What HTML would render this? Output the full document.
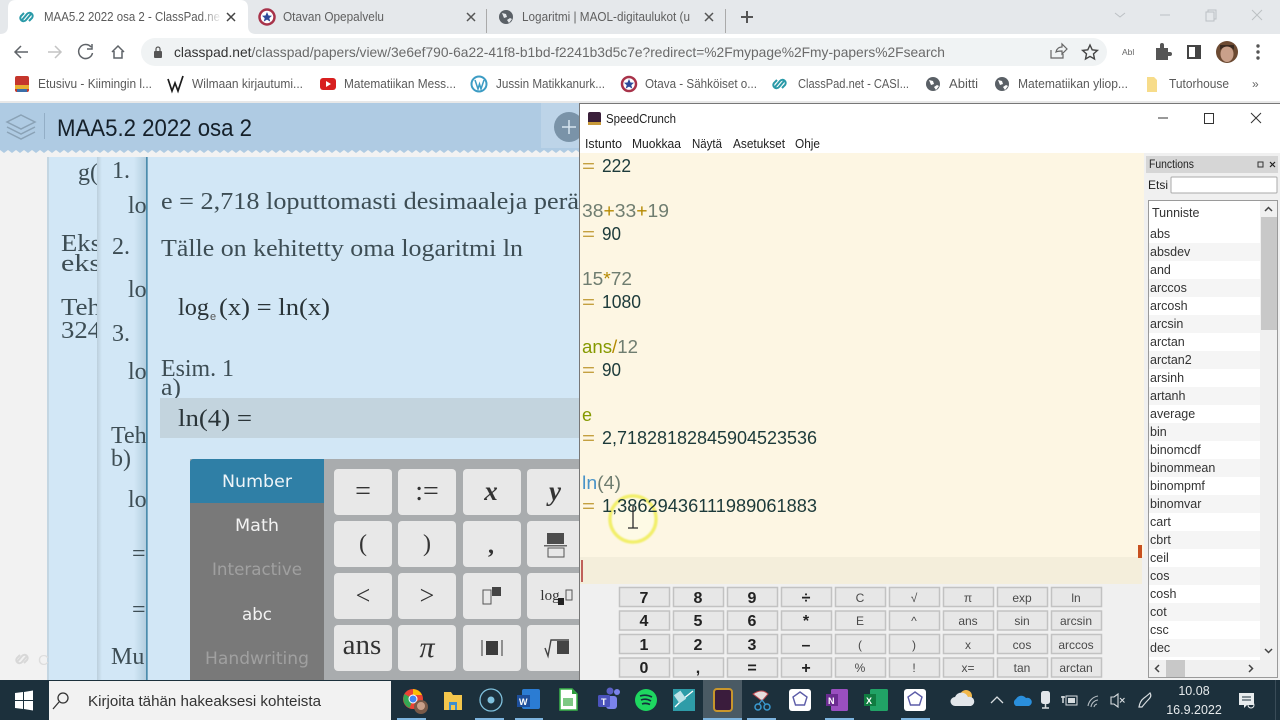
<!DOCTYPE html>
<html><head><meta charset="utf-8"><title>MAA5.2 2022 osa 2</title>
<style>
html,body{margin:0;padding:0;background:#fff;width:1280px;height:720px;overflow:hidden}
svg{display:block}
text{font-family:"Liberation Sans",sans-serif;white-space:pre}
.s text{font-family:"Liberation Serif",serif;fill:#3d4d54}
.d text{font-size:18px}
.f text{font-size:12.5px;fill:#333}
.b{font-size:13px;fill:#5a5a5a}
.k rect{fill:#e7e7e7;stroke:#c2c2c2;stroke-width:1.5}
.kb text{font-weight:bold;font-size:16px;fill:#222;text-anchor:middle}
.kl text{font-size:12px;fill:#4a4a4a;text-anchor:middle}
.c rect{fill:#e8e8e8}
.t text{font-family:"DejaVu Sans",sans-serif;font-size:16.5px}
.m text{font-family:"Liberation Serif",serif;fill:#333;text-anchor:middle}
</style></head><body>
<svg width="1280" height="720" viewBox="0 0 1280 720" xmlns="http://www.w3.org/2000/svg">
<defs>
<linearGradient id="sh" x1="0" x2="1" y1="0" y2="0"><stop offset="0" stop-color="#bccfdc"/><stop offset="1" stop-color="#d2e7f6"/></linearGradient>
<linearGradient id="sr" x1="0" x2="1" y1="0" y2="0"><stop offset="0" stop-color="#d2e7f6"/><stop offset="1" stop-color="#b3cedf"/></linearGradient>
<linearGradient id="fd" x1="0" x2="1" y1="0" y2="0"><stop offset="0" stop-color="#fff" stop-opacity="0"/><stop offset="1" stop-color="#fff"/></linearGradient>
<pattern id="sc" x="0" y="148" width="8" height="5" patternUnits="userSpaceOnUse"><path d="M0 0h8v2l-4 3-4-3z" fill="#afcbe3"/></pattern>
<filter id="bl"><feGaussianBlur stdDeviation=".7"/></filter>
</defs>

<!-- tab strip -->
<rect width="1280" height="34" fill="#e5e8eb"/>
<path d="M0 34Q8 34 8 26V8Q8 0 16 0H240Q248 0 248 8V26Q248 34 256 34Z" fill="#fff"/>
<g fill="none" stroke="#2a9aa8" stroke-width="2"><path d="M22 20l5-6a3 3 0 0 1 5 4l-3 3"/><path d="M31 14l-5 6a3 3 0 0 1-5-4l3-3"/></g>
<text x="44" y="21" font-size="13" fill="#5a5a5a" textLength="176" lengthAdjust="spacingAndGlyphs">MAA5.2 2022 osa 2 - ClassPad.ne</text>
<rect x="200" y="8" width="22" height="20" fill="url(#fd)"/>
<path d="M227 13l8 8M235 13l-8 8" stroke="#444" stroke-width="1.500"/>
<circle cx="267" cy="17" r="7.500" fill="#fff" stroke="#a8334a" stroke-width="2.500"/><path d="M267 12l1.500 3.500 3.500.3-2.700 2.300 1 3.500-3.300-2-3.300 2 1-3.500-2.700-2.300 3.500-.3z" fill="#2e4a9a"/>
<text x="283" y="21" font-size="13" fill="#5f5f5f" textLength="101" lengthAdjust="spacingAndGlyphs">Otavan Opepalvelu</text>
<path d="M467 13l8 8M475 13l-8 8" stroke="#555" stroke-width="1.500"/>
<rect x="486" y="9" width="1" height="24" fill="#aaa"/>
<circle cx="506" cy="17" r="7" fill="#5a6066"/><path d="M502 13l4 1 1 3-3 1zM507 20l3-2 2 1-3 4z" fill="#e5e8eb"/>
<text x="522" y="21" font-size="13" fill="#5f5f5f" textLength="168" lengthAdjust="spacingAndGlyphs">Logaritmi | MAOL-digitaulukot (u</text>
<path d="M705 13l8 8M713 13l-8 8" stroke="#555" stroke-width="1.500"/>
<rect x="725" y="9" width="1" height="24" fill="#aaa"/>
<path d="M741 17h12M747 11v12" stroke="#555" stroke-width="2"/>
<path d="M1115 13l5 4 5-4" fill="none" stroke="#bcc0c4" stroke-width="1"/>
<path d="M1160 15h10" stroke="#bcc0c4" stroke-width="1"/>
<path d="M1206 12h8v9h-8zM1208 12v-2h8v9h-2" fill="none" stroke="#bcc0c4" stroke-width="1"/>
<path d="M1252 10l10 10M1262 10l-10 10" stroke="#bcc0c4" stroke-width="1"/>

<!-- toolbar -->
<rect y="34" width="1280" height="34" fill="#fff"/>
<path d="M28 52H16M21 46l-6 6 6 6" fill="none" stroke="#5f6368" stroke-width="1.500"/>
<path d="M48 52H60M55 46l6 6-6 6" fill="none" stroke="#c4c4c4" stroke-width="1.500"/>
<path d="M91 47a7 7 0 1 0 1.500 6M92 44v5h-5" fill="none" stroke="#5f6368" stroke-width="1.500"/>
<path d="M112 52l6-6 6 6M114 51v7h8v-7" fill="none" stroke="#5f6368" stroke-width="1.500"/>
<rect x="141" y="38" width="966" height="28" rx="14" fill="#f0f3f4"/>
<rect x="154" y="51" width="8" height="7" rx="1" fill="#555"/><path d="M156 51v-2a2 2 0 0 1 4 0v2" fill="none" stroke="#555" stroke-width="1.200"/>
<text x="174" y="57" font-size="14" fill="#6a6a6a" textLength="771" lengthAdjust="spacingAndGlyphs"><tspan fill="#333">classpad.net</tspan>/classpad/papers/view/3e6ef790-6a22-41f8-b1bd-f2241b3d5c7e?redirect=%2Fmypage%2Fmy-papers%2Fsearch</text>
<path d="M1051 50v8h12v-4M1056 52q1-5 6-5v-3l5 5-5 5v-3q-4 0-6 1z" fill="none" stroke="#666" stroke-width="1.200"/>
<path d="M1090 45l2.200 4.800 5.200.6-3.900 3.500 1 5.100-4.500-2.600-4.500 2.600 1-5.100-3.900-3.500 5.200-.6z" fill="none" stroke="#444" stroke-width="1.400"/>
<text x="1122" y="55" font-size="8.500" fill="#666">Abl</text>
<path d="M1156 48h4v-3a2 2 0 0 1 4 0v3h4v4h2a2 2 0 0 1 0 4h-2v4h-12z" fill="#555"/>
<rect x="1188" y="46" width="12" height="12" fill="none" stroke="#444" stroke-width="2"/><rect x="1195" y="46" width="5" height="12" fill="#444"/>
<circle cx="1227" cy="52" r="11" fill="#6c4a32"/><ellipse cx="1227" cy="54" rx="6.500" ry="8" fill="#c9a08a"/><path d="M1220 50q7-7 14 0v-5h-14z" fill="#3a2a20"/>
<g fill="#555"><circle cx="1258" cy="46" r="1.700"/><circle cx="1258" cy="52" r="1.700"/><circle cx="1258" cy="58" r="1.700"/></g>

<!-- bookmarks -->
<rect y="68" width="1280" height="34" fill="#fff"/>
<rect x="15" y="76" width="14" height="16" rx="2" fill="#c5362c"/><rect x="15" y="85" width="14" height="4" fill="#e8b030"/><rect x="17" y="89" width="10" height="3" fill="#3a6ea8"/>
<text class="b" x="38" y="88" textLength="114" lengthAdjust="spacingAndGlyphs">Etusivu - Kiimingin l...</text>
<path d="M168 79l4 12 3-8 3 8 5-15" fill="none" stroke="#1c1c1c" stroke-width="1.700"/>
<text class="b" x="192" y="88" textLength="111" lengthAdjust="spacingAndGlyphs">Wilmaan kirjautumi...</text>
<rect x="320" y="78" width="16" height="12" rx="3" fill="#d81f1f"/><path d="M326 81l5 3-5 3z" fill="#fff"/>
<text class="b" x="344" y="88" textLength="112" lengthAdjust="spacingAndGlyphs">Matematiikan Mess...</text>
<circle cx="479" cy="84" r="7.500" fill="#fff" stroke="#3d9cc4" stroke-width="2"/><path d="M475 80l3 9 1.500-5 1.500 5 3-9" fill="none" stroke="#3d9cc4" stroke-width="1.500"/>
<text class="b" x="496" y="88" textLength="109" lengthAdjust="spacingAndGlyphs">Jussin Matikkanurk...</text>
<circle cx="629" cy="84" r="7" fill="#fff" stroke="#a8334a" stroke-width="2.500"/><path d="M629 79l1.500 3.500 3.500.3-2.700 2.300 1 3.500-3.300-2-3.300 2 1-3.500-2.700-2.300 3.500-.3z" fill="#2e4a9a"/>
<text class="b" x="645" y="88" textLength="112" lengthAdjust="spacingAndGlyphs">Otava - Sähköiset o...</text>
<g fill="none" stroke="#2a9aa8" stroke-width="2"><path d="M775 87l5-6a3 3 0 0 1 5 4l-3 3"/><path d="M784 81l-5 6a3 3 0 0 1-5-4l3-3"/></g>
<text class="b" x="798" y="88" textLength="111" lengthAdjust="spacingAndGlyphs">ClassPad.net - CASI...</text>
<circle cx="933" cy="84" r="7" fill="#5a6066"/><path d="M929 80l4 1 1 3-3 1zM934 87l3-2 2 1-3 4z" fill="#fff"/>
<text class="b" x="949" y="88" textLength="29" lengthAdjust="spacingAndGlyphs">Abitti</text>
<circle cx="1002" cy="84" r="7" fill="#5a6066"/><path d="M998 80l4 1 1 3-3 1zM1003 87l3-2 2 1-3 4z" fill="#fff"/>
<text class="b" x="1018" y="88" textLength="110" lengthAdjust="spacingAndGlyphs">Matematiikan yliop...</text>
<path d="M1147 77h7l3 3v12h-10z" fill="#f7dc8a"/>
<text class="b" x="1169" y="88" textLength="60" lengthAdjust="spacingAndGlyphs">Tutorhouse</text>
<text x="1252" y="88" font-size="12" fill="#666">»</text>
<rect y="101" width="1280" height="2" fill="#e8e8e8"/>

<!-- page background -->
<rect y="103" width="580" height="577" fill="#f2f2f2"/>
<rect y="103" width="580" height="45" fill="#afcbe3"/>
<rect x="541" y="103" width="39" height="45" fill="#bdd4e8"/>
<rect y="148" width="580" height="5" fill="url(#sc)"/>
<path d="M21 115l14 7-14 7-14-7z" fill="none" stroke="#8aa2b6" stroke-width="1.500"/>
<path d="M7 127l14 7 14-7M7 132l14 7 14-7" fill="none" stroke="#8aa2b6" stroke-width="1.500"/>
<rect x="44" y="113" width="1" height="26" fill="#93aec6"/>
<text x="57" y="136" font-size="24" fill="#15202a" textLength="195" lengthAdjust="spacingAndGlyphs">MAA5.2 2022 osa 2</text>
<circle cx="569" cy="127" r="15" fill="#7a93a8"/><path d="M562 127h14M569 120v14" stroke="#d8e6f0" stroke-width="1.500"/>

<!-- paper strips -->
<g class="s" font-size="24">
<rect x="47" y="157" width="60" height="523" fill="#d2e7f6"/>
<rect x="47" y="157" width="2" height="523" fill="#c4d6e2"/>
<text x="78" y="180">g(</text>
<text x="61" y="251" textLength="40" lengthAdjust="spacingAndGlyphs">Eks</text>
<text x="61" y="271" textLength="40" lengthAdjust="spacingAndGlyphs">eks</text>
<text x="61" y="315" textLength="40" lengthAdjust="spacingAndGlyphs">Teh</text>
<text x="61" y="338" textLength="40" lengthAdjust="spacingAndGlyphs">324</text>
<rect x="97" y="157" width="52" height="523" fill="#d2e7f6"/>
<rect x="97" y="157" width="5" height="523" fill="url(#sh)"/>
<rect x="134" y="157" width="12" height="523" fill="url(#sr)"/>
<text x="112" y="178">1.</text>
<text x="128" y="213">lo</text>
<text x="112" y="254">2.</text>
<text x="128" y="297">lo</text>
<text x="112" y="341">3.</text>
<text x="128" y="379">lo</text>
<text x="111" y="443">Teh</text>
<text x="111" y="466">b)</text>
<text x="128" y="507">lo</text>
<text x="132" y="561">=</text>
<text x="132" y="617">=</text>
<text x="111" y="664">Mu</text>
<rect x="146" y="157" width="434" height="523" fill="#d2e7f6"/>
<rect x="146" y="157" width="1.700" height="523" fill="#4c8cad"/>
<text x="161" y="209" textLength="418" lengthAdjust="spacingAndGlyphs">e = 2,718 loputtomasti desimaaleja perä</text>
<text x="161" y="256" textLength="362" lengthAdjust="spacingAndGlyphs">Tälle on kehitetty oma logaritmi ln</text>
<text x="178" y="315" textLength="31" lengthAdjust="spacingAndGlyphs" style="fill:#2a3438">log</text>
<text x="210" y="320" font-size="11" style="font-family:'Liberation Sans',sans-serif;fill:#555">e</text>
<text x="219" y="315" textLength="111" lengthAdjust="spacingAndGlyphs" style="fill:#2a3438">(x) = ln(x)</text>
<text x="161" y="376" textLength="73" lengthAdjust="spacingAndGlyphs">Esim. 1</text>
<text x="161" y="395" textLength="20" lengthAdjust="spacingAndGlyphs">a)</text>
<rect x="160" y="398" width="420" height="40" fill="#c3d4de"/>
<text x="178" y="426" textLength="74" lengthAdjust="spacingAndGlyphs" style="fill:#2a3438">ln(4) =</text>
</g>
<g fill="none" stroke="#d8d8d8" stroke-width="2"><path d="M17 662l5-6a3 3 0 0 1 5 4l-3 3"/><path d="M27 656l-5 6a3 3 0 0 1-5-4l3-3"/></g>
<text x="38" y="665" font-size="15" fill="#ddd">C</text>

<!-- on-screen CAS keyboard -->
<rect x="190" y="459" width="390" height="221" fill="#a9acae"/>
<path d="M190 680V463q0-4 4-4h130v221z" fill="#797979"/>
<path d="M190 503V463q0-4 4-4h130v44z" fill="#2f7fa6"/>
<g class="t">
<text x="222" y="487" fill="#eef4f8" textLength="70" lengthAdjust="spacingAndGlyphs">Number</text>
<text x="235" y="531" fill="#f2f2f2" textLength="44" lengthAdjust="spacingAndGlyphs">Math</text>
<text x="212" y="575" fill="#a0a0a0" textLength="90" lengthAdjust="spacingAndGlyphs">Interactive</text>
<text x="242" y="620" fill="#f2f2f2" textLength="30" lengthAdjust="spacingAndGlyphs">abc</text>
<text x="205" y="664" fill="#a0a0a0" textLength="104" lengthAdjust="spacingAndGlyphs">Handwriting</text>
</g>
<g class="c">
<rect x="334" y="469" width="58" height="46" rx="4"/><rect x="398" y="469" width="58" height="46" rx="4"/><rect x="463" y="469" width="58" height="46" rx="4"/><rect x="527" y="469" width="58" height="46" rx="4"/>
<rect x="334" y="521" width="58" height="46" rx="4"/><rect x="398" y="521" width="58" height="46" rx="4"/><rect x="463" y="521" width="58" height="46" rx="4"/><rect x="527" y="521" width="58" height="46" rx="4"/>
<rect x="334" y="573" width="58" height="46" rx="4"/><rect x="398" y="573" width="58" height="46" rx="4"/><rect x="463" y="573" width="58" height="46" rx="4"/><rect x="527" y="573" width="58" height="46" rx="4"/>
<rect x="334" y="625" width="58" height="46" rx="4"/><rect x="398" y="625" width="58" height="46" rx="4"/><rect x="463" y="625" width="58" height="46" rx="4"/><rect x="527" y="625" width="58" height="46" rx="4"/>
</g>
<g class="m">
<text x="363" y="500" font-size="28">=</text>
<text x="427" y="500" font-size="28">:=</text>
<text x="491" y="500" font-size="27" font-weight="bold" font-style="italic">x</text>
<text x="555" y="500" font-size="27" font-weight="bold" font-style="italic">y</text>
<text x="363" y="551" font-size="24">(</text>
<text x="427" y="551" font-size="24">)</text>
<text x="491" y="553" font-size="24" font-weight="bold">,</text>
<text x="363" y="604" font-size="26">&lt;</text>
<text x="427" y="604" font-size="26">&gt;</text>
<text x="362" y="654" font-size="29">ans</text>
<text x="427" y="657" font-size="30" font-style="italic">π</text>
<text x="550" y="600" font-size="15">log</text>
</g>
<rect x="547" y="533" width="17" height="11" fill="#4d4d4d"/><rect x="544" y="545" width="23" height="1.500" fill="#666"/><rect x="548" y="548" width="16" height="9" fill="none" stroke="#555"/>
<rect x="483" y="590" width="8" height="14" fill="none" stroke="#555"/><rect x="492" y="587" width="9" height="9" fill="#444"/>
<rect x="558" y="598" width="6" height="7" fill="#222"/><rect x="566" y="590" width="6" height="10" fill="none" stroke="#555"/>
<rect x="486" y="641" width="12" height="14" fill="#3c3c3c"/><path d="M482 640v16M502 640v16" stroke="#555" stroke-width="1.200"/>
<rect x="557" y="641" width="12" height="13" fill="#444"/><path d="M545 648l3 8 3-16h18" fill="none" stroke="#444" stroke-width="1.400"/>

<!-- SpeedCrunch window -->
<rect x="579" y="103" width="701" height="577" fill="#f0f0f0"/>
<rect x="579.500" y="103.500" width="701" height="577" fill="none" stroke="#777"/>
<rect x="580" y="104" width="700" height="49" fill="#fff"/>
<rect x="588" y="112" width="13" height="13" rx="2" fill="#3a1f3a"/><rect x="588" y="122" width="13" height="3" fill="#c89a3a"/>
<text x="606" y="123" font-size="13" fill="#222" textLength="70" lengthAdjust="spacingAndGlyphs">SpeedCrunch</text>
<path d="M1158 118h10" stroke="#333"/>
<rect x="1204.500" y="113.500" width="9" height="10" fill="none" stroke="#333"/>
<path d="M1251 113l10 10M1261 113l-10 10" stroke="#333"/>
<g font-size="12.500" fill="#222">
<text x="585" y="148" textLength="37" lengthAdjust="spacingAndGlyphs">Istunto</text>
<text x="632" y="148" textLength="49" lengthAdjust="spacingAndGlyphs">Muokkaa</text>
<text x="692" y="148" textLength="30" lengthAdjust="spacingAndGlyphs">Näytä</text>
<text x="733" y="148" textLength="52" lengthAdjust="spacingAndGlyphs">Asetukset</text>
<text x="795" y="148" textLength="25" lengthAdjust="spacingAndGlyphs">Ohje</text>
</g>
<rect x="580" y="153" width="564" height="404" fill="#fdf6e3"/>
<rect x="580" y="557" width="562" height="27" fill="#f4eedb"/>
<rect x="581" y="560" width="2" height="22" fill="#c0605a"/>
<rect x="1138" y="545" width="4" height="13" fill="#c8501e"/>

<circle cx="633" cy="519" r="23" fill="#fffde8" fill-opacity=".5" stroke="#f2ef6a" stroke-width="3.500" filter="url(#bl)"/>
<g class="d">
<text x="582" y="172" fill="#c4a040" textLength="13" lengthAdjust="spacingAndGlyphs">=</text><text x="602" y="172" fill="#1c3a3a" textLength="29" lengthAdjust="spacingAndGlyphs">222</text>
<text x="582" y="217" fill="#6f7d70" textLength="87" lengthAdjust="spacingAndGlyphs">38<tspan fill="#b58900">+</tspan>33<tspan fill="#b58900">+</tspan>19</text>
<text x="582" y="240" fill="#c4a040" textLength="13" lengthAdjust="spacingAndGlyphs">=</text><text x="602" y="240" fill="#1c3a3a" textLength="19" lengthAdjust="spacingAndGlyphs">90</text>
<text x="582" y="285" fill="#6f7d70" textLength="50" lengthAdjust="spacingAndGlyphs">15<tspan fill="#b58900">*</tspan>72</text>
<text x="582" y="308" fill="#c4a040" textLength="13" lengthAdjust="spacingAndGlyphs">=</text><text x="602" y="308" fill="#1c3a3a" textLength="39" lengthAdjust="spacingAndGlyphs">1080</text>
<text x="582" y="353" fill="#6f7d70" textLength="56" lengthAdjust="spacingAndGlyphs"><tspan fill="#859900">ans</tspan><tspan fill="#b58900">/</tspan>12</text>
<text x="582" y="376" fill="#c4a040" textLength="13" lengthAdjust="spacingAndGlyphs">=</text><text x="602" y="376" fill="#1c3a3a" textLength="19" lengthAdjust="spacingAndGlyphs">90</text>
<text x="582" y="421" fill="#859900">e</text>
<text x="582" y="444" fill="#c4a040" textLength="13" lengthAdjust="spacingAndGlyphs">=</text><text x="602" y="444" fill="#1c3a3a" textLength="215" lengthAdjust="spacingAndGlyphs">2,71828182845904523536</text>
<text x="582" y="489" fill="#6f7d70" textLength="39" lengthAdjust="spacingAndGlyphs"><tspan fill="#4a94c8">ln</tspan>(4)</text>
<text x="582" y="512" fill="#c4a040" textLength="13" lengthAdjust="spacingAndGlyphs">=</text><text x="602" y="512" fill="#1c3a3a" textLength="215" lengthAdjust="spacingAndGlyphs">1,38629436111989061883</text>
</g>
<path d="M633 506v22M628 528h10" stroke="#2a2a2a" stroke-width="1.300"/>

<!-- keypad -->
<g class="k">
<rect x="619.500" y="587.500" width="50" height="19"/><rect x="673.500" y="587.500" width="50" height="19"/><rect x="727.500" y="587.500" width="50" height="19"/><rect x="781.500" y="587.500" width="50" height="19"/><rect x="835.500" y="587.500" width="50" height="19"/><rect x="889.500" y="587.500" width="50" height="19"/><rect x="943.500" y="587.500" width="50" height="19"/><rect x="997.500" y="587.500" width="50" height="19"/><rect x="1051.500" y="587.500" width="50" height="19"/>
<rect x="619.500" y="611" width="50" height="19"/><rect x="673.500" y="611" width="50" height="19"/><rect x="727.500" y="611" width="50" height="19"/><rect x="781.500" y="611" width="50" height="19"/><rect x="835.500" y="611" width="50" height="19"/><rect x="889.500" y="611" width="50" height="19"/><rect x="943.500" y="611" width="50" height="19"/><rect x="997.500" y="611" width="50" height="19"/><rect x="1051.500" y="611" width="50" height="19"/>
<rect x="619.500" y="634.500" width="50" height="19"/><rect x="673.500" y="634.500" width="50" height="19"/><rect x="727.500" y="634.500" width="50" height="19"/><rect x="781.500" y="634.500" width="50" height="19"/><rect x="835.500" y="634.500" width="50" height="19"/><rect x="889.500" y="634.500" width="50" height="19"/><rect x="943.500" y="634.500" width="50" height="19"/><rect x="997.500" y="634.500" width="50" height="19"/><rect x="1051.500" y="634.500" width="50" height="19"/>
<rect x="619.500" y="658" width="50" height="19"/><rect x="673.500" y="658" width="50" height="19"/><rect x="727.500" y="658" width="50" height="19"/><rect x="781.500" y="658" width="50" height="19"/><rect x="835.500" y="658" width="50" height="19"/><rect x="889.500" y="658" width="50" height="19"/><rect x="943.500" y="658" width="50" height="19"/><rect x="997.500" y="658" width="50" height="19"/><rect x="1051.500" y="658" width="50" height="19"/>
</g>
<g class="kb">
<text x="644" y="603">7</text><text x="698" y="603">8</text><text x="752" y="603">9</text><text x="806" y="603">÷</text>
<text x="644" y="626">4</text><text x="698" y="626">5</text><text x="752" y="626">6</text><text x="806" y="626">*</text>
<text x="644" y="650">1</text><text x="698" y="650">2</text><text x="752" y="650">3</text><text x="806" y="650">–</text>
<text x="644" y="673">0</text><text x="698" y="673">,</text><text x="752" y="673">=</text><text x="806" y="673">+</text>
</g>
<g class="kl">
<text x="860" y="602">C</text><text x="914" y="602">√</text><text x="968" y="602">π</text><text x="1022" y="602">exp</text><text x="1076" y="602">ln</text>
<text x="860" y="625">E</text><text x="914" y="625">^</text><text x="968" y="625">ans</text><text x="1022" y="625">sin</text><text x="1076" y="625">arcsin</text>
<text x="860" y="649">(</text><text x="914" y="649">)</text><text x="968" y="649">x</text><text x="1022" y="649">cos</text><text x="1076" y="649">arccos</text>
<text x="860" y="672">%</text><text x="914" y="672">!</text><text x="968" y="672">x=</text><text x="1022" y="672">tan</text><text x="1076" y="672">arctan</text>
</g>

<!-- functions panel -->
<rect x="1144" y="153" width="136" height="527" fill="#f0f0f0"/>
<rect x="1146" y="156" width="132" height="17" fill="#d6d6d6"/>
<text x="1149" y="168" font-size="12" fill="#222" textLength="45" lengthAdjust="spacingAndGlyphs">Functions</text>
<rect x="1258" y="162" width="5" height="5" fill="none" stroke="#333"/>
<path d="M1270 162l5 5M1275 162l-5 5" stroke="#222" stroke-width="1.200"/>
<text x="1148" y="189" font-size="12" fill="#222">Etsi</text>
<rect x="1171" y="177" width="106" height="16" rx="1" fill="#fff" stroke="#aaa"/>
<rect x="1148.500" y="200.500" width="129" height="477" fill="#f0f0f0" stroke="#9a9a9a"/>
<rect x="1149" y="201" width="111" height="459" fill="#fff"/>
<text x="1152" y="217" font-size="12.500" fill="#333">Tunniste</text>
<g fill="#f5f5f5">
<rect x="1149" y="243" width="111" height="18"/><rect x="1149" y="279" width="111" height="18"/><rect x="1149" y="315" width="111" height="18"/><rect x="1149" y="351" width="111" height="18"/><rect x="1149" y="387" width="111" height="18"/><rect x="1149" y="423" width="111" height="18"/><rect x="1149" y="459" width="111" height="18"/><rect x="1149" y="495" width="111" height="18"/><rect x="1149" y="531" width="111" height="18"/><rect x="1149" y="567" width="111" height="18"/><rect x="1149" y="603" width="111" height="18"/><rect x="1149" y="639" width="111" height="18"/>
</g>
<g class="f">
<text x="1150" y="238">abs</text><text x="1150" y="256">absdev</text><text x="1150" y="274">and</text><text x="1150" y="292">arccos</text><text x="1150" y="310">arcosh</text><text x="1150" y="328">arcsin</text><text x="1150" y="346">arctan</text><text x="1150" y="364">arctan2</text><text x="1150" y="382">arsinh</text><text x="1150" y="400">artanh</text><text x="1150" y="418">average</text><text x="1150" y="436">bin</text><text x="1150" y="454">binomcdf</text><text x="1150" y="472">binommean</text><text x="1150" y="490">binompmf</text><text x="1150" y="508">binomvar</text><text x="1150" y="526">cart</text><text x="1150" y="544">cbrt</text><text x="1150" y="562">ceil</text><text x="1150" y="580">cos</text><text x="1150" y="598">cosh</text><text x="1150" y="616">cot</text><text x="1150" y="634">csc</text><text x="1150" y="652">dec</text>
</g>
<rect x="1261" y="217" width="16" height="113" fill="#c8c8c8"/>
<path d="M1265 211l3.500-3.500 3.500 3.500M1265 649l3.500 3.500 3.500-3.500" fill="none" stroke="#444" stroke-width="1.500"/>
<rect x="1166" y="660" width="19" height="17" fill="#c8c8c8"/>
<path d="M1159 665l-3.500 3.500 3.500 3.500M1249 665l3.500 3.500-3.500 3.500" fill="none" stroke="#444" stroke-width="1.500"/>

<!-- taskbar -->
<rect y="680" width="1280" height="40" fill="#1c303c"/>
<g fill="#fff"><path d="M15 693l8-1v8h-8zM24 692l9-1.500V700h-9zM15 701h8v8l-8-1zM24 701h9v9.500l-9-1.500z"/></g>
<rect x="49" y="681" width="342" height="39" fill="#f2f2f2"/>
<circle cx="63" cy="698" r="5" fill="none" stroke="#333" stroke-width="1.300"/><path d="M59 702l-6 7" stroke="#333" stroke-width="1.300"/>
<text x="88" y="706" font-size="14.500" fill="#333" textLength="233" lengthAdjust="spacingAndGlyphs">Kirjoita tähän hakeaksesi kohteista</text>

<circle cx="413" cy="699" r="10" fill="#ea4335"/><path d="M413 699l-8.500-5a10 10 0 0 0 5 14z" fill="#34a853"/><path d="M413 689a10 10 0 0 1 9 6h-9z" fill="#fbbc05"/><circle cx="413" cy="699" r="4" fill="#4285f4" stroke="#fff"/>
<circle cx="421" cy="707" r="7" fill="#7a5a48"/><circle cx="421" cy="706" r="4" fill="#c9a08a"/>
<path d="M444 692h7l2 3h9v15h-18z" fill="#f4c64c"/><rect x="449" y="702" width="8" height="8" fill="#3e8ecf"/><rect x="451" y="705" width="4" height="5" fill="#f4c64c"/>
<circle cx="491" cy="700" r="11" fill="none" stroke="#7fc0dc" stroke-width="1.300"/><circle cx="491" cy="700" r="3.500" fill="#7fc0dc"/>
<rect x="522" y="689" width="18" height="20" rx="2" fill="#2b7cd3"/><rect x="517" y="695" width="13" height="12" fill="#1d4f9c"/><text x="519" y="705" font-size="9" font-weight="bold" fill="#fff">W</text>
<path d="M560 689h12l5 5v16h-17z" fill="#fff" stroke="#3bb54a" stroke-width="1.500"/><path d="M572 689l5 5h-5z" fill="#2f9a3d"/><rect x="563" y="698" width="10" height="8" fill="#7ec884"/>
<rect x="606" y="696" width="11" height="13" rx="3" fill="#7b83eb"/><circle cx="617" cy="692" r="3" fill="#7b83eb"/><circle cx="610" cy="691" r="3.500" fill="#5b60c4"/><rect x="598" y="695" width="12" height="12" rx="1.500" fill="#4b53bc"/><text x="601" y="705" font-size="9" font-weight="bold" fill="#fff">T</text>
<circle cx="646" cy="700" r="11" fill="#1ed760"/><path d="M640 696q6-2 12 1M641 700q5-2 10 1M642 704q4-1.500 8 .5" fill="none" stroke="#13303c" stroke-width="1.700"/>
<rect x="673" y="689" width="22" height="22" fill="#2e9ca8"/><path d="M675 707l8-8 10-8" fill="none" stroke="#fff" stroke-width="1.300"/><rect x="676" y="692" width="8" height="10" fill="#bfe3e8" transform="rotate(-35 680 697)"/>
<rect x="703" y="680" width="39" height="40" fill="#4a5a64"/>
<rect x="714" y="689" width="18" height="22" rx="3" fill="#3a1c3c" stroke="#c8962c" stroke-width="2"/>
<path d="M753 694q9-6 15 0l-6 7z" fill="#e6dcdc" stroke="#b8434a"/><circle cx="758" cy="707" r="3" fill="none" stroke="#3a9ad0" stroke-width="1.500"/><circle cx="767" cy="707" r="3" fill="none" stroke="#3a9ad0" stroke-width="1.500"/><path d="M759 704l3-4 3 4" fill="none" stroke="#3a9ad0" stroke-width="1.200"/>
<rect x="789" y="689" width="22" height="22" rx="3" fill="#fff"/><path d="M800 692l7 5-2.500 8h-9l-2.500-8z" fill="none" stroke="#5c5ca8" stroke-width="1.400"/>
<rect x="831" y="689" width="17" height="22" rx="1.500" fill="#9a4fc0"/><rect x="826" y="694" width="12" height="12" fill="#6b2c91"/><text x="828" y="704" font-size="9" font-weight="bold" fill="#fff">N</text>
<rect x="870" y="689" width="18" height="22" rx="1.500" fill="#21a366"/><rect x="864" y="694" width="12" height="12" fill="#107c41"/><text x="866" y="704" font-size="9" font-weight="bold" fill="#fff">X</text>
<rect x="904" y="689" width="22" height="22" rx="3" fill="#fff"/><path d="M915 692l7 5-2.500 8h-9l-2.500-8z" fill="none" stroke="#5c5ca8" stroke-width="1.400"/>
<g fill="#7db4de"><rect x="397" y="718" width="29" height="2"/><rect x="475" y="718" width="29" height="2"/><rect x="515" y="718" width="28" height="2"/><rect x="703" y="718" width="39" height="2"/><rect x="747" y="718" width="29" height="2"/><rect x="825" y="718" width="29" height="2"/><rect x="901" y="718" width="29" height="2"/></g>
<circle cx="966" cy="696" r="6" fill="#f2b84b"/><path d="M955 706a4.500 4.500 0 0 1 0-9 7 7 0 0 1 13 0 4.500 4.500 0 0 1 3 9z" fill="#e2e6ea"/>
<path d="M991 703l6-6 6 6" fill="none" stroke="#d8dde0" stroke-width="1.300"/>
<path d="M1016 706a4 4 0 0 1 0-7 6 6 0 0 1 10-1 4 4 0 0 1 3 8z" fill="#2a8fdc"/>
<rect x="1041" y="691" width="9" height="13" rx="2.500" fill="#e2e6ea"/><path d="M1045.500 704v4M1042 708h7" stroke="#d8dde0" stroke-width="1.500"/>
<path d="M1061 697h4M1063 696v7" stroke="#d8dde0" stroke-width="1.500"/><rect x="1066" y="696" width="11" height="9" fill="none" stroke="#d8dde0"/><rect x="1068" y="698" width="7" height="5" fill="#d8dde0"/>
<path d="M1088 706a12 12 0 0 1 10-10M1091 707a8 8 0 0 1 7-7M1094 707a4 4 0 0 1 3-3" fill="none" stroke="#b8c0c6" stroke-width="1.100"/>
<path d="M1111 697h3l4-3v13l-4-3h-3zM1120 698l4.500 4.500M1124.500 698l-4.500 4.500" fill="none" stroke="#d8dde0" stroke-width="1.100"/>
<path d="M1139 707q1-6 5-9t6-5q2 3-1 6t-7 8z" fill="none" stroke="#d8dde0" stroke-width="1.200"/>
<text x="1194" y="695" font-size="12.500" fill="#e6eaec" text-anchor="middle">10.08</text>
<text x="1194" y="714" font-size="12.500" fill="#e6eaec" text-anchor="middle">16.9.2022</text>
<path d="M1239 693h15v12h-7l-3 3v-3h-5z" fill="#e8ecee"/><path d="M1242 697h9M1242 700h9" stroke="#1c303c"/>
<circle cx="1251" cy="705" r="3" fill="none" stroke="#e8ecee"/>
<rect x="1275" y="680" width="1" height="40" fill="#3a4c58"/>
</svg>
</body></html>
